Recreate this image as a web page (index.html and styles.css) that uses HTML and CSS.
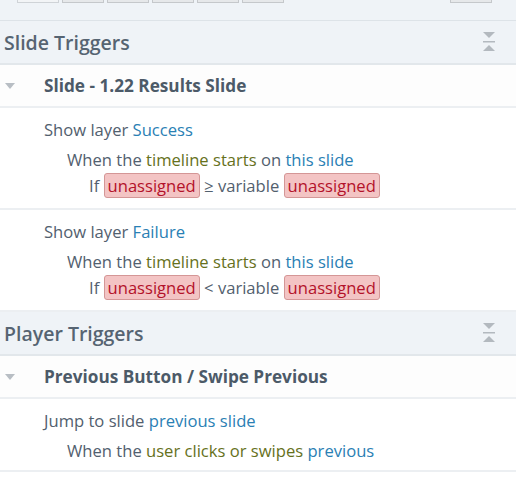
FILE: index.html
```html
<!DOCTYPE html>
<html>
<head>
<meta charset="utf-8">
<link rel="stylesheet" href="styles.css">
</head>
<body>
<div class="panel">
  <div class="toolbar">
    <div class="tools">
      <span class="tbtn first"></span><span class="tbtn"></span><span class="tbtn"></span><span class="tbtn"></span><span class="tbtn"></span><span class="tbtn"></span>
    </div>
    <span class="tbtn right"></span>
  </div>

  <div class="section">
    <span class="section-title">Slide Triggers</span>
    <svg class="collapse" width="12" height="20" viewBox="0 0 12 20"><path d="M0 0H12L6 6Z" fill="#b3b9bf"/><rect x="0" y="9" width="12" height="1.5" fill="#b3b9bf"/><path d="M6 13L12 19H0Z" fill="#b3b9bf"/></svg>
  </div>
  <div class="group">
    <svg class="arrow" width="10" height="6" viewBox="0 0 10 6"><path d="M0 0H10L5 6Z" fill="#b8bec4"/></svg>
    <span class="group-title">Slide - 1.22 Results Slide</span>
  </div>
  <div class="trigger">
    <div class="l1">Show layer <span class="link">Success</span></div>
    <div class="l2">When the <span class="ev">timeline starts</span> on <span class="link">this slide</span></div>
    <div class="l3">If <span class="tag">unassigned</span> ≥ variable <span class="tag">unassigned</span></div>
  </div>
  <div class="trigger">
    <div class="l1">Show layer <span class="link">Failure</span></div>
    <div class="l2">When the <span class="ev">timeline starts</span> on <span class="link">this slide</span></div>
    <div class="l3">If <span class="tag">unassigned</span> &lt; variable <span class="tag">unassigned</span></div>
  </div>

  <div class="section">
    <span class="section-title">Player Triggers</span>
    <svg class="collapse" width="12" height="20" viewBox="0 0 12 20"><path d="M0 0H12L6 6Z" fill="#b3b9bf"/><rect x="0" y="9" width="12" height="1.5" fill="#b3b9bf"/><path d="M6 13L12 19H0Z" fill="#b3b9bf"/></svg>
  </div>
  <div class="group">
    <svg class="arrow" width="10" height="6" viewBox="0 0 10 6"><path d="M0 0H10L5 6Z" fill="#b8bec4"/></svg>
    <span class="group-title">Previous Button / Swipe Previous</span>
  </div>
  <div class="trigger short">
    <div class="l1">Jump to slide <span class="link">previous slide</span></div>
    <div class="l2">When the <span class="ev">user clicks or swipes</span> <span class="link">previous</span></div>
  </div>
</div>
</body>
</html>
```
FILE: styles.css
```css
html, body {
  margin: 0;
  padding: 0;
  background: #ffffff;
}
body {
  font-family: "Open Sans", "Noto Sans", sans-serif;
  color: #52606e;
  width: 516px;
  height: 485px;
  overflow: hidden;
}
.panel {
  display: flex;
  flex-direction: column;
}
.toolbar {
  height: 20px;
  background: #eff3f7;
  border-bottom: 1px solid #dde3e8;
  display: flex;
  justify-content: space-between;
  align-items: flex-start;
  padding: 0 24px 0 17px;
}
.tools {
  display: flex;
  gap: 3px;
}
.tbtn {
  display: block;
  width: 40px;
  height: 2px;
  border: 1px solid #c5c8cb;
  border-top: none;
  background: #e6e8ea;
}
.tbtn.first {
  background: #f2f4f6;
  border-color: #cfd3d7;
}
.section {
  height: 42px;
  background: #eff3f7;
  border-bottom: 2px solid #e2e7eb;
  display: flex;
  align-items: center;
  justify-content: space-between;
  padding: 0 21px 0 4px;
}
.section-title {
  font-size: 19.5px;
  font-weight: 600;
  color: #566472;
}
.collapse {
  display: block;
}
.group {
  height: 41px;
  background: #fdfdfd;
  border-bottom: 2px solid #eceff2;
  display: flex;
  align-items: center;
  padding-left: 5px;
}
.arrow {
  display: block;
  margin-right: 29px;
}
.group-title {
  font-size: 17.2px;
  font-weight: 700;
  color: #4c5a68;
}
.trigger {
  border-bottom: 2px solid #eceff2;
  padding: 10px 0 0 44px;
  box-sizing: border-box;
  height: 102px;
  font-size: 16.6px;
}
.trigger.short {
  height: 73px;
}
.l1 {
  line-height: 23px;
}
.l2 {
  line-height: 23px;
  margin-top: 7px;
  padding-left: 23px;
}
.l3 {
  line-height: 23px;
  margin-top: 2px;
  padding-left: 45px;
}
.link {
  color: #2a80b4;
}
.ev {
  color: #66711c;
}
.tag {
  display: inline-block;
  background: #f3c4c4;
  border: 1px solid #d49696;
  border-radius: 3px;
  color: #b3122a;
  padding: 0 3px;
  line-height: 23px;
}
```
